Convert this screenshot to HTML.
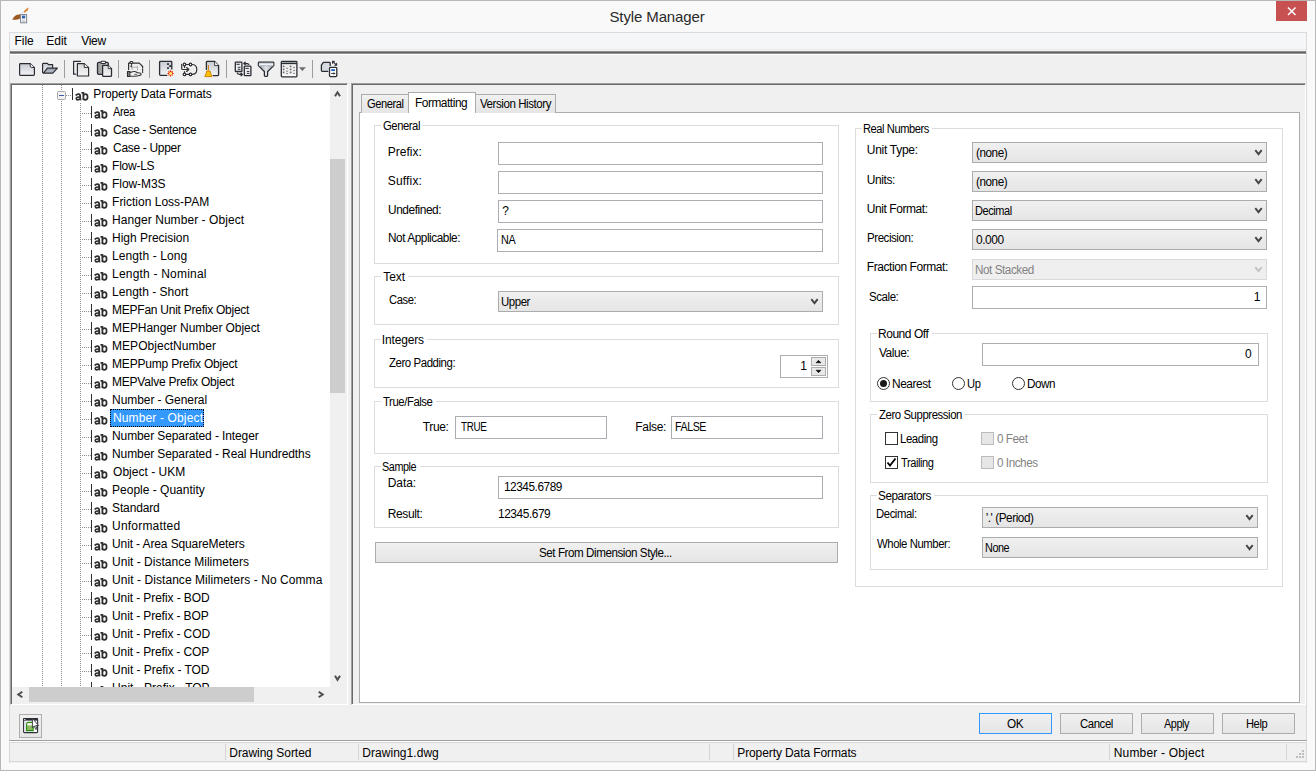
<!DOCTYPE html><html><head><meta charset="utf-8"><title>Style Manager</title><style>
html,body{margin:0;padding:0;width:1316px;height:771px;overflow:hidden;background:#f9f9f9;}
body{position:relative;font-family:"Liberation Sans",sans-serif;font-size:12px;}
div,svg{position:absolute;box-sizing:border-box;}
.t{white-space:nowrap;}
</style></head><body>
<div style="left:0px;top:0px;width:1316px;height:771px;border:1px solid #b7b7b7;background:#f9f9f9;"></div>
<div class="t" style="left:609.45px;top:9px;font-size:15px;line-height:15px;color:#2b2b2b;letter-spacing:-0.117px;">Style Manager</div>
<div style="left:1276px;top:1px;width:31px;height:20px;background:#c75050;"></div>
<svg style="left:1276px;top:1px" width="31" height="20"><path d="M12 6.5 L19.5 14 M19.5 6.5 L12 14" stroke="#fff" stroke-width="1.5"/></svg>
<svg style="left:0px;top:0px" width="34" height="30" viewBox="0 0 34 30">
<path d="M23.2 11.8 L27.8 7.6 C28.6 8.2 28.6 9.4 27.6 10.4 L24.6 12.8 Z" fill="#e0893a"/>
<path d="M19.6 14.6 L23.6 11.4" stroke="#e3eef8" stroke-width="1.4"/>
<path d="M12.2 19.8 C13.2 17.6 14.8 15.6 17.2 14.8 L20.6 14.2 L20.6 18.6 C18.6 19.6 15.6 20 12.2 19.8 Z" fill="#9c5a22"/>
<rect x="20.6" y="14.6" width="6" height="8.2" fill="#fafbfc" stroke="#7d838c" stroke-width="1"/>
<rect x="22" y="15.6" width="3.2" height="2.8" fill="#2f63ad"/>
<path d="M22 20.2 H25.2 M22 21.6 H25.2" stroke="#b8bdc4" stroke-width="0.8"/>
</svg>
<div style="left:9px;top:32px;width:1298px;height:731px;background:#f0f0f0;border-left:1px solid #dadada;border-right:1px solid #dadada;"></div>
<div style="left:9px;top:32px;width:1298px;height:19px;background:#f5f6f7;border:1px solid #dadbdc;border-bottom:none;"></div>
<div class="t" style="left:14.55px;top:35px;font-size:12px;line-height:12px;color:#000;letter-spacing:-0.033px;">File</div>
<div class="t" style="left:46.25px;top:35px;font-size:12px;line-height:12px;color:#000;letter-spacing:0.000px;">Edit</div>
<div class="t" style="left:81.25px;top:35px;font-size:12px;line-height:12px;color:#000;letter-spacing:-0.333px;">View</div>
<div style="left:10px;top:49px;width:1296px;height:1px;background:#e8e9ea;"></div>
<div style="left:10px;top:51px;width:1296px;height:3px;background:linear-gradient(#8a8a8a 0,#8a8a8a 33%,#666 33%,#666 66%,#909090 66%);"></div>
<div style="left:10px;top:54px;width:1296px;height:1px;background:#fff;"></div>
<svg style="left:0;top:0" width="360" height="90" viewBox="0 0 360 90">
<defs>
<linearGradient id="gdoc" x1="0" y1="0" x2="0" y2="1"><stop offset="0" stop-color="#c7cbd3"/><stop offset="1" stop-color="#f3f4f6"/></linearGradient>
<linearGradient id="gdoc2" x1="0" y1="0" x2="0" y2="1"><stop offset="0" stop-color="#d9d9d9"/><stop offset="1" stop-color="#f5f5f5"/></linearGradient>
<linearGradient id="gclip" x1="0" y1="0" x2="1" y2="0"><stop offset="0" stop-color="#9a9a9a"/><stop offset="1" stop-color="#cdcdcd"/></linearGradient>
<linearGradient id="gflap" x1="0" y1="0" x2="0" y2="1"><stop offset="0" stop-color="#9aa2b0"/><stop offset="1" stop-color="#b9bfca"/></linearGradient>
<linearGradient id="gfun" x1="0" y1="0" x2="0" y2="1"><stop offset="0" stop-color="#b5bcc5"/><stop offset="0.45" stop-color="#f6f7f9"/><stop offset="1" stop-color="#9ea6b0"/></linearGradient>
<linearGradient id="gcone" x1="0" y1="0" x2="1" y2="0"><stop offset="0" stop-color="#8f98a3"/><stop offset="0.5" stop-color="#e4e7ea"/><stop offset="1" stop-color="#8f98a3"/></linearGradient>
</defs>
<g fill="none" stroke="#2a2d33" stroke-width="1.2" stroke-linejoin="round" stroke-linecap="round">
<!-- new -->
<path d="M20.2 63.6 H30.2 L34.4 67.6 V74.6 Q34.4 75.4 33.6 75.4 H20.2 Q19.6 75.4 19.6 74.6 V64.4 Q19.6 63.6 20.4 63.6" fill="url(#gdoc)"/>
<path d="M30.2 63.8 V66.2 Q30.4 67.4 31.8 67.4 H34.2" fill="#fff" stroke-width="1"/>
<!-- open -->
<path d="M42.6 72.6 V64.2 Q42.6 63.4 43.4 63.4 H47.4 L48.4 64.6 H52.6 V67.6" fill="url(#gdoc)"/>
<path d="M43.4 73.2 L47.4 68.1 H57.4 L52.8 73.2 Z" fill="url(#gflap)"/>
<!-- copy -->
<path d="M80.4 61.4 H73.6 V74.2 H75.6"/>
<path d="M77.4 63.6 H84.2 L88.6 67.8 V76 H77.4 Z" fill="url(#gdoc2)"/>
<path d="M84.2 63.8 V67.4 H88.4" fill="#fff" stroke-width="1"/>
<!-- paste -->
<rect x="97.5" y="62.3" width="10.8" height="12" rx="1.2" fill="url(#gclip)" stroke-width="1.3"/>
<rect x="100.9" y="61.2" width="4.7" height="2.3" rx="1" fill="#fff" stroke-width="1.1"/>
<path d="M102.6 65.4 H108.2 L111.5 68.6 V75.4 Q111.5 76.3 110.6 76.3 H103.5 Q102.6 76.3 102.6 75.4 Z" fill="url(#gdoc2)" stroke-width="1.3"/>
<path d="M108.2 65.6 V68.6 H111.3" fill="#fff" stroke-width="0.9"/>
<!-- hands -->
<path d="M128.6 69.6 V63.2 H139.3 L142.6 66.5 V68" stroke="#333"/>
<path d="M142.6 69 V72.5" stroke="#333" stroke-dasharray="1.5 1"/>
<rect x="130.5" y="61.5" width="2.2" height="1.8" fill="#fff" stroke-width="1"/>
<path d="M131.6 63.5 V66.5 M130.4 66 L131.6 67.4" stroke="#333" stroke-width="1"/>
<path d="M132 67.2 H137.5 M137.5 66.2 V70 M132 67.2 V69.5" stroke="#b0b0b0" stroke-width="1"/>
<rect x="127.5" y="71.5" width="2.6" height="5" fill="#808080" stroke-width="1.1"/>
<path d="M130.5 72.6 C133 71.3 135.5 71.3 137 72.5 L140.5 73.2 C141.5 73.6 141.3 75 140 75.3 C137 76.4 133 76.4 130.5 76" fill="#f6f6f6" stroke="#333" stroke-width="1.1"/>
<path d="M134.5 74.3 H137" stroke="#555" stroke-width="0.9"/>
<!-- doc star -->
<path d="M166.8 75.4 H160.4 Q159.6 75.4 159.6 74.6 V62.2 Q159.6 61.4 160.4 61.4 H171 Q171.8 61.4 171.8 62.2 V69" fill="url(#gdoc)" stroke-width="1.3"/>
<!-- loop -->
<path d="M181.7 64.4 V68.4 Q181.7 69.5 182.8 69.5 H188.4" stroke="#333"/>
<path d="M186.6 67.6 L188.8 69.5 L186.6 71.4" stroke="#333" stroke-width="1.3"/>
<path d="M185.8 64.5 H189.2 M185.8 74.4 H189.2 M184.5 65.8 V67.4 M184.5 71.6 V73.1" stroke="#333"/>
<path d="M191.8 64.5 C195.5 64.5 196.8 66.5 196.8 69.4 C196.8 72.4 195.5 74.4 191.8 74.4" stroke="#333"/>
<circle cx="184.5" cy="64.5" r="1.3" fill="#fff"/>
<circle cx="190.5" cy="64.5" r="1.3" fill="#fff"/>
<circle cx="184.5" cy="74.4" r="1.3" fill="#fff"/>
<circle cx="190.5" cy="74.4" r="1.3" fill="#fff"/>
<!-- brush doc -->
<path d="M206.4 69.4 V62.1 Q206.4 61.4 207.2 61.4 H214.6 L218.6 65.6 V74.8 Q218.6 75.6 217.8 75.6 H213.2" fill="url(#gdoc)" stroke-width="1.3"/>
<path d="M214.6 61.6 V65.6 H218.4" fill="#fff" stroke-width="0.9"/>
<!-- compare -->
<rect x="235.3" y="62.1" width="6.6" height="9.4" rx="0.6" fill="#eceef1" stroke-width="1.3"/>
<rect x="244.3" y="66.2" width="6.6" height="9.4" rx="0.6" fill="#eceef1" stroke-width="1.3"/>
<path d="M236.8 64.3 H239.4 M238.2 67.3 H240 M238.2 69.3 H240 M245.8 68.4 H248.4 M247.2 71.4 H249 M247.2 73.4 H249" stroke-width="1"/>
<path d="M248.8 64.4 Q248 63.4 244 63.4 M245.2 62.2 L243.8 63.4 L245.2 64.6" stroke-width="1.3"/>
<path d="M237.4 73.2 Q238 74.5 242.2 74.5 M241 73.3 L242.4 74.5 L241 75.7" stroke-width="1.3"/>
<!-- funnel -->
<path d="M264.4 71.6 L258.4 65.6 V63 Q258.4 62.2 259.2 62.2 H273 Q273.8 62.2 273.8 63 V65.6 L267.6 71.6" fill="url(#gcone)" stroke-width="1.3"/>
<rect x="258.9" y="62.8" width="14.4" height="3.4" fill="url(#gfun)" stroke="none"/>
<path d="M264.4 71.4 V75.6 Q264.4 76.4 265.2 76.4 H266.8 Q267.6 76.4 267.6 75.6 V71.4" fill="#e8ebee" stroke-width="1.3"/>
<!-- grid -->
<rect x="281.3" y="61.4" width="15.6" height="15.4" rx="0.8" fill="#fbfbfb" stroke-width="1.3"/>
<path d="M281.8 63.6 H296.4" stroke-width="1.2"/>
<rect x="282.4" y="62" width="13.4" height="1" fill="#9a9a9a" stroke="none"/>
<rect x="282.4" y="64.6" width="13.4" height="9.6" fill="#ececec" stroke="none"/>
</g>
<g fill="#6a6a6a">
<rect x="282.8" y="65.6" width="1.6" height="1.6"/><rect x="289.8" y="65.6" width="1.6" height="1.6"/>
<rect x="282.8" y="68.6" width="1.6" height="1.6"/><rect x="289.8" y="68.6" width="1.6" height="1.6"/>
<rect x="282.8" y="71.6" width="1.6" height="1.6"/><rect x="289.8" y="71.6" width="1.6" height="1.6"/>
<rect x="286.3" y="67.8" width="1.6" height="0.9"/><rect x="293.3" y="67" width="1.6" height="0.9"/>
<rect x="286.3" y="70.8" width="1.6" height="0.9"/><rect x="293.3" y="70" width="1.6" height="0.9"/>
<rect x="286.3" y="73.2" width="1.6" height="0.9"/><rect x="293.3" y="73" width="1.6" height="0.9"/>
</g>
<path d="M298.9 67.2 H305.9 L302.4 70.9 Z" fill="#6d6d6d"/>
<g fill="none" stroke="#2a2d33" stroke-width="1.3" stroke-linejoin="round" stroke-linecap="round">
<!-- last icon -->
<path d="M327.8 71.3 H322.2 Q321.4 71.3 321.4 70.5 V65.2 L323.4 62.4 H329.4 Q330.2 62.4 330.2 63.2 V65.6" fill="#d8dce2"/>
<rect x="329.5" y="67.4" width="7.3" height="9.2" rx="1" fill="#fff"/>
<path d="M333 61.6 L336.2 64.8 M332.6 63.2 V61.4 H334.2 M336.6 63.4 V65.2 H334.8" stroke-width="1.1"/>
</g>
<rect x="331.2" y="69.2" width="3.8" height="1.8" fill="#1f5fc0"/>
<path d="M331.2 73.5 H335.2 M333.6 72.3 L334.8 73.5 L333.6 74.7" fill="none" stroke="#2a2d33" stroke-width="0.9"/>
<!-- star -->
<g transform="translate(170.6 73.4)">
<path d="M0 -3.6 L0.9 -1.6 L2.6 -2.6 L1.8 -0.8 L3.6 0 L1.8 0.8 L2.6 2.6 L0.9 1.6 L0 3.6 L-0.9 1.6 L-2.6 2.6 L-1.8 0.8 L-3.6 0 L-1.8 -0.8 L-2.6 -2.6 L-0.9 -1.6 Z" fill="#e62a00"/>
<circle r="1.5" fill="#ffe97a"/>
</g>
<!-- checker -->
<g fill="#2a2d33"><rect x="167.1" y="63.2" width="1.8" height="1.8"/><rect x="169.2" y="65.2" width="1.8" height="1.8"/><rect x="167.1" y="67.2" width="1.8" height="1.8"/></g>
<!-- broom -->
<path d="M208.4 65 V70.5" stroke="#cf7f00" stroke-width="1"/>
<path d="M206.8 71 H210 L210.8 73.6 L212 76.6 H204.8 L206 73.6 Z" fill="#f7c200" stroke="#d07a00" stroke-width="0.9"/>
<g stroke="#9c9c9c" stroke-width="1"><path d="M64.5 60 V78 M118.5 60 V78 M149.5 60 V78 M226.5 60 V78 M312.5 60 V78"/></g>
</svg>
<div style="left:10px;top:83px;width:338px;height:622px;background:#f0f0f0;border-top:1px solid #a0a0a0;border-left:1px solid #a0a0a0;border-right:1px solid #fff;border-bottom:1px solid #fff;box-shadow:inset 1px 1px 0 #696969;"></div>
<div style="left:12px;top:85px;width:318px;height:602px;background:#fff;"></div>
<div style="left:330px;top:159px;width:15px;height:234px;background:#cdcdcd;"></div>
<div style="left:29px;top:687px;width:225px;height:15px;background:#cdcdcd;"></div>
<svg style="left:12px;top:85px" width="318" height="602" viewBox="12 85 318 602"><defs><g id="ab" fill="none" stroke="#2e2e2e" stroke-linecap="butt"><path d="M0.5 0 V12" stroke-width="1"/><path d="M3.7 7.5 Q4.8 6 6.5 6.1 Q8.2 6.2 8.2 8.2 V11.2 Q8.2 11.5 9.3 11.5" stroke-width="1.8"/><path d="M8 9 Q4.3 8.8 4.3 10.4 Q4.3 11.8 5.8 11.8 Q7.1 11.8 8 10.7" stroke-width="1.7"/><path d="M9.5 4.8 H11.4 V12" stroke-width="1.8"/><path d="M11.4 7.3 Q12.2 6.1 13.5 6.1 Q15.6 6.1 15.6 8.9 Q15.6 11.8 13.3 11.8 Q12.1 11.8 11.4 11.1" stroke-width="1.7"/></g></defs><path d="M42.5 85 V687" stroke="#8e8e8e" stroke-dasharray="1 1"/><path d="M61.5 85 V687" stroke="#8e8e8e" stroke-dasharray="1 1"/><path d="M80.5 103 V687" stroke="#8e8e8e" stroke-dasharray="1 1"/><rect x="57" y="91" width="9" height="9" fill="#fff"/><rect x="57.5" y="91.5" width="8" height="8" rx="1" fill="#f4f4f4" stroke="#a5a5a5"/><path d="M59 95.5 H64" stroke="#3c5aa8" stroke-width="1"/><path d="M66 95.5 H71" stroke="#8e8e8e" stroke-dasharray="1 1"/><use href="#ab" x="72" y="88"/><path d="M82 113.5 H91" stroke="#8e8e8e" stroke-dasharray="1 1"/><use href="#ab" x="91" y="106"/><path d="M82 131.5 H91" stroke="#8e8e8e" stroke-dasharray="1 1"/><use href="#ab" x="91" y="124"/><path d="M82 149.5 H91" stroke="#8e8e8e" stroke-dasharray="1 1"/><use href="#ab" x="91" y="142"/><path d="M82 167.5 H91" stroke="#8e8e8e" stroke-dasharray="1 1"/><use href="#ab" x="91" y="160"/><path d="M82 185.5 H91" stroke="#8e8e8e" stroke-dasharray="1 1"/><use href="#ab" x="91" y="178"/><path d="M82 203.5 H91" stroke="#8e8e8e" stroke-dasharray="1 1"/><use href="#ab" x="91" y="196"/><path d="M82 221.5 H91" stroke="#8e8e8e" stroke-dasharray="1 1"/><use href="#ab" x="91" y="214"/><path d="M82 239.5 H91" stroke="#8e8e8e" stroke-dasharray="1 1"/><use href="#ab" x="91" y="232"/><path d="M82 257.5 H91" stroke="#8e8e8e" stroke-dasharray="1 1"/><use href="#ab" x="91" y="250"/><path d="M82 275.5 H91" stroke="#8e8e8e" stroke-dasharray="1 1"/><use href="#ab" x="91" y="268"/><path d="M82 293.5 H91" stroke="#8e8e8e" stroke-dasharray="1 1"/><use href="#ab" x="91" y="286"/><path d="M82 311.5 H91" stroke="#8e8e8e" stroke-dasharray="1 1"/><use href="#ab" x="91" y="304"/><path d="M82 329.5 H91" stroke="#8e8e8e" stroke-dasharray="1 1"/><use href="#ab" x="91" y="322"/><path d="M82 347.5 H91" stroke="#8e8e8e" stroke-dasharray="1 1"/><use href="#ab" x="91" y="340"/><path d="M82 365.5 H91" stroke="#8e8e8e" stroke-dasharray="1 1"/><use href="#ab" x="91" y="358"/><path d="M82 383.5 H91" stroke="#8e8e8e" stroke-dasharray="1 1"/><use href="#ab" x="91" y="376"/><path d="M82 401.5 H91" stroke="#8e8e8e" stroke-dasharray="1 1"/><use href="#ab" x="91" y="394"/><path d="M82 419.5 H91" stroke="#8e8e8e" stroke-dasharray="1 1"/><use href="#ab" x="91" y="412"/><path d="M82 437.5 H91" stroke="#8e8e8e" stroke-dasharray="1 1"/><use href="#ab" x="91" y="430"/><path d="M82 455.5 H91" stroke="#8e8e8e" stroke-dasharray="1 1"/><use href="#ab" x="91" y="448"/><path d="M82 473.5 H91" stroke="#8e8e8e" stroke-dasharray="1 1"/><use href="#ab" x="91" y="466"/><path d="M82 491.5 H91" stroke="#8e8e8e" stroke-dasharray="1 1"/><use href="#ab" x="91" y="484"/><path d="M82 509.5 H91" stroke="#8e8e8e" stroke-dasharray="1 1"/><use href="#ab" x="91" y="502"/><path d="M82 527.5 H91" stroke="#8e8e8e" stroke-dasharray="1 1"/><use href="#ab" x="91" y="520"/><path d="M82 545.5 H91" stroke="#8e8e8e" stroke-dasharray="1 1"/><use href="#ab" x="91" y="538"/><path d="M82 563.5 H91" stroke="#8e8e8e" stroke-dasharray="1 1"/><use href="#ab" x="91" y="556"/><path d="M82 581.5 H91" stroke="#8e8e8e" stroke-dasharray="1 1"/><use href="#ab" x="91" y="574"/><path d="M82 599.5 H91" stroke="#8e8e8e" stroke-dasharray="1 1"/><use href="#ab" x="91" y="592"/><path d="M82 617.5 H91" stroke="#8e8e8e" stroke-dasharray="1 1"/><use href="#ab" x="91" y="610"/><path d="M82 635.5 H91" stroke="#8e8e8e" stroke-dasharray="1 1"/><use href="#ab" x="91" y="628"/><path d="M82 653.5 H91" stroke="#8e8e8e" stroke-dasharray="1 1"/><use href="#ab" x="91" y="646"/><path d="M82 671.5 H91" stroke="#8e8e8e" stroke-dasharray="1 1"/><use href="#ab" x="91" y="664"/><path d="M82 689.5 H91" stroke="#8e8e8e" stroke-dasharray="1 1"/><use href="#ab" x="91" y="682"/></svg>
<div style="left:110px;top:409px;width:94px;height:18px;background:#3399ff;border:1px dotted #000;"></div>
<div style="left:12px;top:85px;width:318px;height:602px;overflow:hidden">
<div class="t" style="left:81.35px;top:3px;font-size:12px;line-height:12px;color:#000;letter-spacing:-0.150px;">Property Data Formats</div>
<div class="t" style="left:101.05px;top:21px;font-size:12px;line-height:12px;color:#000;letter-spacing:-0.450px;transform:scaleX(0.9229);transform-origin:0 0;--x:0px;">Area</div>
<div class="t" style="left:101.05px;top:39px;font-size:12px;line-height:12px;color:#000;letter-spacing:-0.411px;">Case - Sentence</div>
<div class="t" style="left:101.05px;top:57px;font-size:12px;line-height:12px;color:#000;letter-spacing:-0.318px;">Case - Upper</div>
<div class="t" style="left:100.05px;top:75px;font-size:12px;line-height:12px;color:#000;letter-spacing:-0.250px;">Flow-LS</div>
<div class="t" style="left:100.05px;top:93px;font-size:12px;line-height:12px;color:#000;letter-spacing:-0.071px;">Flow-M3S</div>
<div class="t" style="left:100.05px;top:111px;font-size:12px;line-height:12px;color:#000;letter-spacing:0.000px;">Friction Loss-PAM</div>
<div class="t" style="left:100.05px;top:129px;font-size:12px;line-height:12px;color:#000;letter-spacing:0.060px;">Hanger Number - Object</div>
<div class="t" style="left:100.05px;top:147px;font-size:12px;line-height:12px;color:#000;letter-spacing:-0.019px;">High Precision</div>
<div class="t" style="left:100.05px;top:165px;font-size:12px;line-height:12px;color:#000;letter-spacing:0.083px;">Length - Long</div>
<div class="t" style="left:100.05px;top:183px;font-size:12px;line-height:12px;color:#000;letter-spacing:0.200px;">Length - Nominal</div>
<div class="t" style="left:100.05px;top:201px;font-size:12px;line-height:12px;color:#000;letter-spacing:0.019px;">Length - Short</div>
<div class="t" style="left:100.05px;top:219px;font-size:12px;line-height:12px;color:#000;letter-spacing:-0.250px;">MEPFan Unit Prefix Object</div>
<div class="t" style="left:100.05px;top:237px;font-size:12px;line-height:12px;color:#000;letter-spacing:-0.068px;">MEPHanger Number Object</div>
<div class="t" style="left:100.05px;top:255px;font-size:12px;line-height:12px;color:#000;letter-spacing:0.036px;">MEPObjectNumber</div>
<div class="t" style="left:100.05px;top:273px;font-size:12px;line-height:12px;color:#000;letter-spacing:-0.188px;">MEPPump Prefix Object</div>
<div class="t" style="left:100.05px;top:291px;font-size:12px;line-height:12px;color:#000;letter-spacing:-0.226px;">MEPValve Prefix Object</div>
<div class="t" style="left:100.05px;top:309px;font-size:12px;line-height:12px;color:#000;letter-spacing:-0.067px;">Number - General</div>
<div class="t" style="left:100.95px;top:327px;font-size:12px;line-height:12px;color:#fff;letter-spacing:0.143px;">Number - Object</div>
<div class="t" style="left:100.05px;top:345px;font-size:12px;line-height:12px;color:#000;letter-spacing:-0.110px;">Number Separated - Integer</div>
<div class="t" style="left:100.05px;top:363px;font-size:12px;line-height:12px;color:#000;letter-spacing:-0.106px;">Number Separated - Real Hundredths</div>
<div class="t" style="left:101.05px;top:381px;font-size:12px;line-height:12px;color:#000;letter-spacing:0.023px;">Object - UKM</div>
<div class="t" style="left:100.05px;top:399px;font-size:12px;line-height:12px;color:#000;letter-spacing:0.000px;">People - Quantity</div>
<div class="t" style="left:100.05px;top:417px;font-size:12px;line-height:12px;color:#000;letter-spacing:-0.143px;">Standard</div>
<div class="t" style="left:100.05px;top:435px;font-size:12px;line-height:12px;color:#000;letter-spacing:0.200px;">Unformatted</div>
<div class="t" style="left:100.05px;top:453px;font-size:12px;line-height:12px;color:#000;letter-spacing:-0.120px;">Unit - Area SquareMeters</div>
<div class="t" style="left:100.05px;top:471px;font-size:12px;line-height:12px;color:#000;letter-spacing:0.010px;">Unit - Distance Milimeters</div>
<div class="t" style="left:100.05px;top:489px;font-size:12px;line-height:12px;color:#000;letter-spacing:0.062px;">Unit - Distance Milimeters - No Comma</div>
<div class="t" style="left:100.05px;top:507px;font-size:12px;line-height:12px;color:#000;letter-spacing:-0.097px;">Unit - Prefix - BOD</div>
<div class="t" style="left:100.05px;top:525px;font-size:12px;line-height:12px;color:#000;letter-spacing:-0.111px;">Unit - Prefix - BOP</div>
<div class="t" style="left:100.05px;top:543px;font-size:12px;line-height:12px;color:#000;letter-spacing:-0.111px;">Unit - Prefix - COD</div>
<div class="t" style="left:100.05px;top:561px;font-size:12px;line-height:12px;color:#000;letter-spacing:-0.125px;">Unit - Prefix - COP</div>
<div class="t" style="left:100.05px;top:579px;font-size:12px;line-height:12px;color:#000;letter-spacing:-0.042px;">Unit - Prefix - TOD</div>
<div class="t" style="left:100.05px;top:597px;font-size:12px;line-height:12px;color:#000;letter-spacing:0.000px;">Unit - Prefix - TOP</div>
</div>
<svg style="left:0;top:0" width="360" height="771">
<g fill="none" stroke="#4d4d4d" stroke-width="2">
<path d="M335 96.3 L337.5 92.3 L340 96.3"/>
<path d="M335 675.8 L337.5 679.8 L340 675.8"/>
<path d="M22.3 691.7 L18.3 694.5 L22.3 697.3"/>
<path d="M318.7 691.7 L322.7 694.5 L318.7 697.3"/>
</g></svg>
<div style="left:351px;top:83px;width:955px;height:622px;background:#f0f0f0;border-top:1px solid #a0a0a0;border-left:1px solid #a0a0a0;border-right:1px solid #fff;border-bottom:1px solid #fff;box-shadow:inset 1px 1px 0 #696969;"></div>
<div style="left:359px;top:112px;width:941px;height:591px;background:#fff;border:1px solid #acacac;"></div>
<div style="left:361px;top:94px;width:48px;height:19px;background:linear-gradient(#f0f0f0,#e5e5e5);border:1px solid #acacac;border-bottom:none;"></div>
<div style="left:475px;top:94px;width:81px;height:19px;background:linear-gradient(#f0f0f0,#e5e5e5);border:1px solid #acacac;border-bottom:none;"></div>
<div style="left:408px;top:92px;width:68px;height:21px;background:#fff;border:1px solid #acacac;border-bottom:none;"></div>
<div class="t" style="left:367.05px;top:98px;font-size:12px;line-height:12px;color:#000;letter-spacing:-0.450px;transform:scaleX(0.9262);transform-origin:0 0;--x:0px;">General</div>
<div class="t" style="left:414.86px;top:97px;font-size:12px;line-height:12px;color:#000;letter-spacing:-0.450px;transform:scaleX(0.9875);transform-origin:0 0;--x:0px;">Formatting</div>
<div class="t" style="left:479.85px;top:98px;font-size:12px;line-height:12px;color:#000;letter-spacing:-0.450px;transform:scaleX(0.9612);transform-origin:0 0;--x:0px;">Version History</div>
<div style="left:374px;top:125px;width:465px;height:139px;border:1px solid #dcdcdc;"></div>
<div style="left:380.6px;top:123px;width:41.75px;height:5px;background:#fff;"></div>
<div class="t" style="left:382.85px;top:120px;font-size:12px;line-height:12px;color:#000;letter-spacing:-0.450px;transform:scaleX(0.9351);transform-origin:0 0;--x:0px;">General</div>
<div class="t" style="left:387.75px;top:146px;font-size:12px;line-height:12px;color:#000;letter-spacing:0.000px;">Prefix:</div>
<div style="left:498px;top:142px;width:325px;height:23px;background:#fff;border:1px solid #abadb3;"></div>
<div class="t" style="left:387.75px;top:175px;font-size:12px;line-height:12px;color:#000;letter-spacing:0.167px;">Suffix:</div>
<div style="left:498px;top:171px;width:325px;height:23px;background:#fff;border:1px solid #abadb3;"></div>
<div class="t" style="left:387.76px;top:204px;font-size:12px;line-height:12px;color:#000;letter-spacing:-0.450px;transform:scaleX(0.9913);transform-origin:0 0;--x:0px;">Undefined:</div>
<div style="left:498px;top:200px;width:325px;height:23px;background:#fff;border:1px solid #abadb3;"></div>
<div class="t" style="left:502.25px;top:205px;font-size:12px;line-height:12px;color:#000;letter-spacing:0.000px;">?</div>
<div class="t" style="left:387.77px;top:232px;font-size:12px;line-height:12px;color:#000;letter-spacing:-0.450px;transform:scaleX(0.9833);transform-origin:0 0;--x:0px;">Not Applicable:</div>
<div style="left:497px;top:229px;width:326px;height:23px;background:#fff;border:1px solid #abadb3;"></div>
<div class="t" style="left:501.35px;top:234px;font-size:12px;line-height:12px;color:#000;letter-spacing:-0.450px;transform:scaleX(0.9003);transform-origin:0 0;--x:0px;">NA</div>
<div style="left:374px;top:276px;width:465px;height:49px;border:1px solid #dcdcdc;"></div>
<div style="left:381px;top:274px;width:26.75px;height:5px;background:#fff;"></div>
<div class="t" style="left:383.25px;top:271px;font-size:12px;line-height:12px;color:#000;letter-spacing:-0.083px;">Text</div>
<div class="t" style="left:388.75px;top:294px;font-size:12px;line-height:12px;color:#000;letter-spacing:-0.450px;transform:scaleX(0.9332);transform-origin:0 0;--x:0px;">Case:</div>
<div style="left:498px;top:291px;width:325px;height:21px;background:linear-gradient(#f0f0f0,#e5e5e5);border:1px solid #acacac;"></div>
<div class="t" style="left:501.10px;top:296px;font-size:12px;line-height:12px;color:#000;letter-spacing:-0.450px;transform:scaleX(0.9520);transform-origin:0 0;--x:0px;">Upper</div>
<svg style="left:809px;top:296px" width="10" height="10"><path d="M2.3 3.2 L5.5 7.2 L8.7 3.2" fill="none" stroke="#444" stroke-width="1.9"/></svg>
<div style="left:374px;top:339px;width:465px;height:49px;border:1px solid #dcdcdc;"></div>
<div style="left:380.5px;top:337px;width:46px;height:5px;background:#fff;"></div>
<div class="t" style="left:381.75px;top:334px;font-size:12px;line-height:12px;color:#000;letter-spacing:-0.143px;">Integers</div>
<div class="t" style="left:388.75px;top:357px;font-size:12px;line-height:12px;color:#000;letter-spacing:-0.450px;transform:scaleX(0.9519);transform-origin:0 0;--x:0px;">Zero Padding:</div>
<div style="left:780px;top:355px;width:48px;height:23px;background:#fff;border:1px solid #abadb3;"></div>
<div class="t" style="left:800.25px;top:360px;font-size:12px;line-height:12px;color:#000;letter-spacing:0.000px;">1</div>
<div style="left:811px;top:357px;width:15px;height:9px;background:#e8e8e8;border:1px solid #acacac;"></div>
<div style="left:811px;top:367px;width:15px;height:9px;background:#e8e8e8;border:1px solid #acacac;"></div>
<svg style="left:811px;top:357px" width="15" height="19"><path d="M5 5.8 L7.5 3.3 L10 5.8 Z M5 13.2 L7.5 15.7 L10 13.2 Z" fill="#000" stroke="#000" stroke-width="0.5"/></svg>
<div style="left:374px;top:401px;width:465px;height:53px;border:1px solid #dcdcdc;"></div>
<div style="left:381px;top:399px;width:55px;height:5px;background:#fff;"></div>
<div class="t" style="left:383.25px;top:396px;font-size:12px;line-height:12px;color:#000;letter-spacing:-0.450px;transform:scaleX(0.9443);transform-origin:0 0;--x:0px;">True/False</div>
<div class="t" style="left:422.75px;top:421px;font-size:12px;line-height:12px;color:#000;letter-spacing:-0.375px;">True:</div>
<div style="left:455px;top:416px;width:152px;height:23px;background:#fff;border:1px solid #abadb3;"></div>
<div class="t" style="left:460.75px;top:421px;font-size:12px;line-height:12px;color:#000;letter-spacing:-0.450px;transform:scaleX(0.8215);transform-origin:0 0;--x:0px;">TRUE</div>
<div class="t" style="left:635.25px;top:421px;font-size:12px;line-height:12px;color:#000;letter-spacing:-0.300px;">False:</div>
<div style="left:671px;top:416px;width:152px;height:23px;background:#fff;border:1px solid #abadb3;"></div>
<div class="t" style="left:675.37px;top:421px;font-size:12px;line-height:12px;color:#000;letter-spacing:-0.450px;transform:scaleX(0.8845);transform-origin:0 0;--x:0px;">FALSE</div>
<div style="left:374px;top:466px;width:465px;height:62px;border:1px solid #dcdcdc;"></div>
<div style="left:380.5px;top:464px;width:39px;height:5px;background:#fff;"></div>
<div class="t" style="left:381.85px;top:461px;font-size:12px;line-height:12px;color:#000;letter-spacing:-0.450px;transform:scaleX(0.9007);transform-origin:0 0;--x:0px;">Sample</div>
<div class="t" style="left:387.75px;top:477px;font-size:12px;line-height:12px;color:#000;letter-spacing:-0.062px;">Data:</div>
<div style="left:498px;top:476px;width:325px;height:23px;background:#fff;border:1px solid #abadb3;"></div>
<div class="t" style="left:503.77px;top:481px;font-size:12px;line-height:12px;color:#000;letter-spacing:-0.450px;transform:scaleX(0.9836);transform-origin:0 0;--x:0px;">12345.6789</div>
<div class="t" style="left:387.75px;top:508px;font-size:12px;line-height:12px;color:#000;letter-spacing:-0.375px;">Result:</div>
<div class="t" style="left:497.76px;top:508px;font-size:12px;line-height:12px;color:#000;letter-spacing:-0.450px;transform:scaleX(0.9922);transform-origin:0 0;--x:0px;">12345.679</div>
<div style="left:375px;top:542px;width:463px;height:21px;background:linear-gradient(#f0f0f0,#e5e5e5);border:1px solid #acacac;"></div>
<div class="t" style="left:538.78px;top:547px;font-size:12px;line-height:12px;color:#000;letter-spacing:-0.450px;transform:scaleX(0.9685);transform-origin:0 0;--x:0px;">Set From Dimension Style...</div>
<div style="left:855px;top:128px;width:428px;height:459px;border:1px solid #dcdcdc;"></div>
<div style="left:861.5px;top:126px;width:70.75px;height:5px;background:#fff;"></div>
<div class="t" style="left:862.82px;top:123px;font-size:12px;line-height:12px;color:#000;letter-spacing:-0.450px;transform:scaleX(0.9254);transform-origin:0 0;--x:0px;">Real Numbers</div>
<div class="t" style="left:866.75px;top:144px;font-size:12px;line-height:12px;color:#000;letter-spacing:-0.278px;">Unit Type:</div>
<div style="left:972px;top:142px;width:295px;height:21px;background:linear-gradient(#f0f0f0,#e5e5e5);border:1px solid #acacac;"></div>
<div class="t" style="left:976.35px;top:147px;font-size:12px;line-height:12px;color:#000;letter-spacing:-0.450px;transform:scaleX(0.9764);transform-origin:0 0;--x:0px;">(none)</div>
<svg style="left:1253px;top:147px" width="10" height="10"><path d="M2.3 3.2 L5.5 7.2 L8.7 3.2" fill="none" stroke="#444" stroke-width="1.9"/></svg>
<div class="t" style="left:866.75px;top:174px;font-size:12px;line-height:12px;color:#000;letter-spacing:-0.400px;">Units:</div>
<div style="left:972px;top:171px;width:295px;height:21px;background:linear-gradient(#f0f0f0,#e5e5e5);border:1px solid #acacac;"></div>
<div class="t" style="left:976.35px;top:176px;font-size:12px;line-height:12px;color:#000;letter-spacing:-0.450px;transform:scaleX(0.9764);transform-origin:0 0;--x:0px;">(none)</div>
<svg style="left:1253px;top:176px" width="10" height="10"><path d="M2.3 3.2 L5.5 7.2 L8.7 3.2" fill="none" stroke="#444" stroke-width="1.9"/></svg>
<div class="t" style="left:866.75px;top:203px;font-size:12px;line-height:12px;color:#000;letter-spacing:-0.432px;">Unit Format:</div>
<div style="left:972px;top:200px;width:295px;height:21px;background:linear-gradient(#f0f0f0,#e5e5e5);border:1px solid #acacac;"></div>
<div class="t" style="left:974.83px;top:205px;font-size:12px;line-height:12px;color:#000;letter-spacing:-0.450px;transform:scaleX(0.9160);transform-origin:0 0;--x:0px;">Decimal</div>
<svg style="left:1253px;top:205px" width="10" height="10"><path d="M2.3 3.2 L5.5 7.2 L8.7 3.2" fill="none" stroke="#444" stroke-width="1.9"/></svg>
<div class="t" style="left:866.79px;top:232px;font-size:12px;line-height:12px;color:#000;letter-spacing:-0.450px;transform:scaleX(0.9585);transform-origin:0 0;--x:0px;">Precision:</div>
<div style="left:972px;top:229px;width:295px;height:21px;background:linear-gradient(#f0f0f0,#e5e5e5);border:1px solid #acacac;"></div>
<div class="t" style="left:975.75px;top:234px;font-size:12px;line-height:12px;color:#000;letter-spacing:-0.450px;transform:scaleX(0.9929);transform-origin:0 0;--x:0px;">0.000</div>
<svg style="left:1253px;top:234px" width="10" height="10"><path d="M2.3 3.2 L5.5 7.2 L8.7 3.2" fill="none" stroke="#444" stroke-width="1.9"/></svg>
<div class="t" style="left:866.75px;top:261px;font-size:12px;line-height:12px;color:#000;letter-spacing:-0.433px;">Fraction Format:</div>
<div style="left:972px;top:259px;width:295px;height:21px;background:#efefef;border:1px solid #d9d9d9;"></div>
<div class="t" style="left:974.78px;top:264px;font-size:12px;line-height:12px;color:#838383;letter-spacing:-0.450px;transform:scaleX(0.9748);transform-origin:0 0;--x:0px;">Not Stacked</div>
<svg style="left:1253px;top:264px" width="10" height="10"><path d="M2.3 3.2 L5.5 7.2 L8.7 3.2" fill="none" stroke="#c2c2c2" stroke-width="1.9"/></svg>
<div class="t" style="left:868.79px;top:291px;font-size:12px;line-height:12px;color:#000;letter-spacing:-0.450px;transform:scaleX(0.9580);transform-origin:0 0;--x:0px;">Scale:</div>
<div style="left:972px;top:286px;width:295px;height:23px;background:#fff;border:1px solid #abadb3;"></div>
<div class="t" style="left:1253.75px;top:291px;font-size:12px;line-height:12px;color:#000;letter-spacing:0.000px;">1</div>
<div style="left:870px;top:333px;width:398px;height:69px;border:1px solid #dcdcdc;"></div>
<div style="left:876.7px;top:331px;width:55.25px;height:5px;background:#fff;"></div>
<div class="t" style="left:877.95px;top:328px;font-size:12px;line-height:12px;color:#000;letter-spacing:-0.450px;">Round Off</div>
<div class="t" style="left:878.75px;top:347px;font-size:12px;line-height:12px;color:#000;letter-spacing:-0.450px;transform:scaleX(0.9916);transform-origin:0 0;--x:0px;">Value:</div>
<div style="left:982px;top:343px;width:277px;height:23px;background:#fff;border:1px solid #abadb3;"></div>
<div class="t" style="left:1245.00px;top:348px;font-size:12px;line-height:12px;color:#000;letter-spacing:0.000px;">0</div>
<svg style="left:877px;top:377px" width="14" height="14"><circle cx="6.5" cy="6.5" r="6" fill="#fff" stroke="#333" stroke-width="1"/><circle cx="6.5" cy="6.5" r="3.5" fill="#1a1a1a"/></svg>
<div class="t" style="left:891.96px;top:378px;font-size:12px;line-height:12px;color:#000;letter-spacing:-0.450px;transform:scaleX(0.9922);transform-origin:0 0;--x:0px;">Nearest</div>
<svg style="left:952px;top:377px" width="14" height="14"><circle cx="6.5" cy="6.5" r="6" fill="#fff" stroke="#333" stroke-width="1"/></svg>
<div class="t" style="left:966.92px;top:378px;font-size:12px;line-height:12px;color:#000;letter-spacing:-0.450px;transform:scaleX(0.9299);transform-origin:0 0;--x:0px;">Up</div>
<svg style="left:1012px;top:377px" width="14" height="14"><circle cx="6.5" cy="6.5" r="6" fill="#fff" stroke="#333" stroke-width="1"/></svg>
<div class="t" style="left:1026.58px;top:378px;font-size:12px;line-height:12px;color:#000;letter-spacing:-0.450px;transform:scaleX(0.9729);transform-origin:0 0;--x:0px;">Down</div>
<div style="left:870px;top:414px;width:398px;height:69px;border:1px solid #dcdcdc;"></div>
<div style="left:876.5px;top:412px;width:87.75px;height:5px;background:#fff;"></div>
<div class="t" style="left:878.75px;top:409px;font-size:12px;line-height:12px;color:#000;letter-spacing:-0.450px;transform:scaleX(0.9484);transform-origin:0 0;--x:0px;">Zero Suppression</div>
<div style="left:885px;top:432px;width:13px;height:13px;background:#fff;border:1px solid #333;"></div>
<div class="t" style="left:899.80px;top:433px;font-size:12px;line-height:12px;color:#000;letter-spacing:-0.450px;transform:scaleX(0.9530);transform-origin:0 0;--x:0px;">Leading</div>
<div style="left:885px;top:456px;width:13px;height:13px;background:#fff;border:1px solid #333;"></div>
<svg style="left:885px;top:456px" width="13" height="13"><path d="M2.5 6.5 L5 9.5 L10.5 2.5" fill="none" stroke="#000" stroke-width="1.8"/></svg>
<div class="t" style="left:901.25px;top:457px;font-size:12px;line-height:12px;color:#000;letter-spacing:-0.450px;transform:scaleX(0.9205);transform-origin:0 0;--x:0px;">Trailing</div>
<div style="left:981px;top:432px;width:13px;height:13px;background:#e6e6e6;border:1px solid #bcbcbc;"></div>
<div class="t" style="left:996.85px;top:433px;font-size:12px;line-height:12px;color:#838383;letter-spacing:-0.450px;transform:scaleX(0.9732);transform-origin:0 0;--x:0px;">0 Feet</div>
<div style="left:981px;top:456px;width:13px;height:13px;background:#e6e6e6;border:1px solid #bcbcbc;"></div>
<div class="t" style="left:996.85px;top:457px;font-size:12px;line-height:12px;color:#838383;letter-spacing:-0.450px;transform:scaleX(0.9725);transform-origin:0 0;--x:0px;">0 Inches</div>
<div style="left:870px;top:495px;width:398px;height:75px;border:1px solid #dcdcdc;"></div>
<div style="left:876.5px;top:493px;width:57.75px;height:5px;background:#fff;"></div>
<div class="t" style="left:877.77px;top:490px;font-size:12px;line-height:12px;color:#000;letter-spacing:-0.450px;transform:scaleX(0.9778);transform-origin:0 0;--x:0px;">Separators</div>
<div class="t" style="left:875.81px;top:508px;font-size:12px;line-height:12px;color:#000;letter-spacing:-0.450px;transform:scaleX(0.9438);transform-origin:0 0;--x:0px;">Decimal:</div>
<div style="left:982px;top:507px;width:276px;height:21px;background:linear-gradient(#f0f0f0,#e5e5e5);border:1px solid #acacac;"></div>
<div class="t" style="left:985.75px;top:512px;font-size:12px;line-height:12px;color:#000;letter-spacing:-0.450px;transform:scaleX(0.9786);transform-origin:0 0;--x:0px;">'.' (Period)</div>
<svg style="left:1244px;top:512px" width="10" height="10"><path d="M2.3 3.2 L5.5 7.2 L8.7 3.2" fill="none" stroke="#444" stroke-width="1.9"/></svg>
<div class="t" style="left:876.75px;top:538px;font-size:12px;line-height:12px;color:#000;letter-spacing:-0.450px;transform:scaleX(0.9439);transform-origin:0 0;--x:0px;">Whole Number:</div>
<div style="left:982px;top:537px;width:276px;height:21px;background:linear-gradient(#f0f0f0,#e5e5e5);border:1px solid #acacac;"></div>
<div class="t" style="left:984.85px;top:542px;font-size:12px;line-height:12px;color:#000;letter-spacing:-0.450px;transform:scaleX(0.9006);transform-origin:0 0;--x:0px;">None</div>
<svg style="left:1244px;top:542px" width="10" height="10"><path d="M2.3 3.2 L5.5 7.2 L8.7 3.2" fill="none" stroke="#444" stroke-width="1.9"/></svg>
<div style="left:19px;top:714px;width:23px;height:24px;background:linear-gradient(#f0f0f0,#e5e5e5);border:1px solid #adadad;"></div>
<svg style="left:19px;top:714px" width="24" height="24">
<defs><linearGradient id="ggr" x1="0" y1="0" x2="0" y2="1"><stop offset="0" stop-color="#f4f8ee"/><stop offset="0.35" stop-color="#f4f8ee"/><stop offset="0.4" stop-color="#93bb63"/><stop offset="1" stop-color="#8fb85e"/></linearGradient></defs>
<rect x="4.6" y="4.6" width="14" height="14" rx="0.8" fill="#fdfdfd" stroke="#2c3036" stroke-width="1.1"/>
<rect x="4.2" y="4.2" width="14.8" height="2.4" fill="#2c3036"/>
<rect x="5.2" y="5" width="1.2" height="1" fill="#fff"/>
<rect x="5.3" y="7.2" width="1.5" height="10.8" fill="#d8dce6"/>
<path d="M7.6 16.6 V10 Q7.6 8.4 9.4 8.4 H14.2 V16.6 Z" fill="url(#ggr)" stroke="#2a8a10" stroke-width="1.1"/>
<path d="M13.4 4.3 V13.6 L15.3 12.1 L16.7 15.4 L18 14.8 L16.6 11.6 H19.6 Z" fill="#fff" stroke="#2c3036" stroke-width="0.9" stroke-linejoin="round"/>
</svg>
<div style="left:979px;top:713px;width:73px;height:21px;background:linear-gradient(#f0f0f0,#e5e5e5);border:1px solid #3399ff;"></div>
<div class="t" style="left:1007.25px;top:718px;font-size:12px;line-height:12px;color:#000;letter-spacing:-0.450px;transform:scaleX(0.9819);transform-origin:0 0;--x:0px;">OK</div>
<div style="left:1060px;top:713px;width:73px;height:21px;background:linear-gradient(#f0f0f0,#e5e5e5);border:1px solid #acacac;"></div>
<div class="t" style="left:1079.75px;top:718px;font-size:12px;line-height:12px;color:#000;letter-spacing:-0.450px;transform:scaleX(0.9496);transform-origin:0 0;--x:0px;">Cancel</div>
<div style="left:1141px;top:713px;width:73px;height:21px;background:linear-gradient(#f0f0f0,#e5e5e5);border:1px solid #acacac;"></div>
<div class="t" style="left:1164.25px;top:718px;font-size:12px;line-height:12px;color:#000;letter-spacing:-0.450px;transform:scaleX(0.9043);transform-origin:0 0;--x:0px;">Apply</div>
<div style="left:1222px;top:713px;width:73px;height:21px;background:linear-gradient(#f0f0f0,#e5e5e5);border:1px solid #acacac;"></div>
<div class="t" style="left:1246.32px;top:718px;font-size:12px;line-height:12px;color:#000;letter-spacing:-0.450px;transform:scaleX(0.9272);transform-origin:0 0;--x:0px;">Help</div>
<div style="left:9px;top:740px;width:1298px;height:1px;background:#a0a0a0;"></div>
<div style="left:9px;top:741px;width:1298px;height:1px;background:#fff;"></div>
<div style="left:9px;top:742px;width:1298px;height:20px;background:#f0f0f0;border:1px solid #d7d7d7;"></div>
<div style="left:225px;top:744px;width:1px;height:16px;background:#d5d5d5;"></div>
<div style="left:358px;top:744px;width:1px;height:16px;background:#d5d5d5;"></div>
<div style="left:709px;top:744px;width:1px;height:16px;background:#d5d5d5;"></div>
<div style="left:733px;top:744px;width:1px;height:16px;background:#d5d5d5;"></div>
<div style="left:1109px;top:744px;width:1px;height:16px;background:#d5d5d5;"></div>
<div style="left:1286px;top:744px;width:1px;height:16px;background:#d5d5d5;"></div>
<div class="t" style="left:229.25px;top:747px;font-size:12px;line-height:12px;color:#000;letter-spacing:-0.038px;">Drawing Sorted</div>
<div class="t" style="left:362.25px;top:747px;font-size:12px;line-height:12px;color:#000;letter-spacing:0.045px;">Drawing1.dwg</div>
<div class="t" style="left:737.25px;top:747px;font-size:12px;line-height:12px;color:#000;letter-spacing:-0.100px;">Property Data Formats</div>
<div class="t" style="left:1113.75px;top:747px;font-size:12px;line-height:12px;color:#000;letter-spacing:0.179px;">Number - Object</div>
<svg style="left:1294px;top:749px" width="12" height="12"><g fill="#bdbdbd"><rect x="8" y="1" width="2" height="2"/><rect x="5" y="4" width="2" height="2"/><rect x="8" y="4" width="2" height="2"/><rect x="2" y="7" width="2" height="2"/><rect x="5" y="7" width="2" height="2"/><rect x="8" y="7" width="2" height="2"/></g></svg>
</body></html>
